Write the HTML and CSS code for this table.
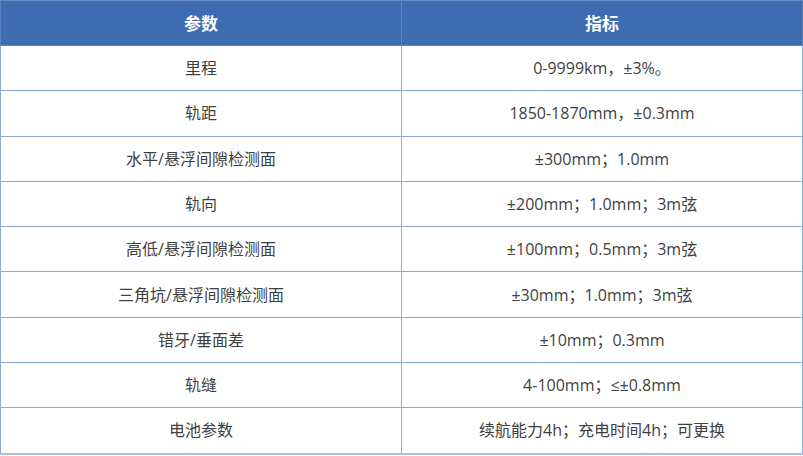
FILE: index.html
```html
<!DOCTYPE html>
<html lang="zh">
<head>
<meta charset="utf-8">
<link rel="stylesheet" href="styles.css">
</head>
<body>
<table class="spec">
  <thead>
    <tr><th>参数</th><th>指标</th></tr>
  </thead>
  <tbody>
    <tr><td>里程</td><td>0-9999km，±3%。</td></tr>
    <tr><td>轨距</td><td>1850-1870mm，±0.3mm</td></tr>
    <tr><td>水平/悬浮间隙检测面</td><td>±300mm；1.0mm</td></tr>
    <tr><td>轨向</td><td>±200mm；1.0mm；3m弦</td></tr>
    <tr><td>高低/悬浮间隙检测面</td><td>±100mm；0.5mm；3m弦</td></tr>
    <tr><td>三角坑/悬浮间隙检测面</td><td>±30mm；1.0mm；3m弦</td></tr>
    <tr><td>错牙/垂面差</td><td>±10mm；0.3mm</td></tr>
    <tr><td>轨缝</td><td>4-100mm；≤±0.8mm</td></tr>
    <tr class="last"><td>电池参数</td><td>续航能力4h；充电时间4h；可更换</td></tr>
  </tbody>
</table>
</body>
</html>
```

FILE: styles.css
```css
html, body {
  margin: 0;
  padding: 0;
  background: #ffffff;
}
body {
  width: 803px;
  height: 456px;
  overflow: hidden;
  font-family: "Open Sans", "Noto Sans CJK SC", sans-serif;
}
.spec {
  width: 803px;
  border-collapse: collapse;
  table-layout: fixed;
}
.spec th,
.spec td {
  border: 1px solid #8eaadb;
  text-align: center;
  padding: 0;
  width: 50%;
  line-height: 1.2;
}
.spec th {
  background: #3d6cb0;
  color: #ffffff;
  font-weight: bold;
  font-size: 17px;
  height: 45px;
  padding-top: 3px;
  box-sizing: border-box;
  border-color: #5b82bf;
  border-top-color: #6a8fc8;
}
.spec td {
  color: #3f3f3f;
  font-size: 16px;
  height: 43.3px;
  padding-top: 1px;
}
.spec tr.last td {
  border-bottom: 2px solid #a8bde0;
}
```
